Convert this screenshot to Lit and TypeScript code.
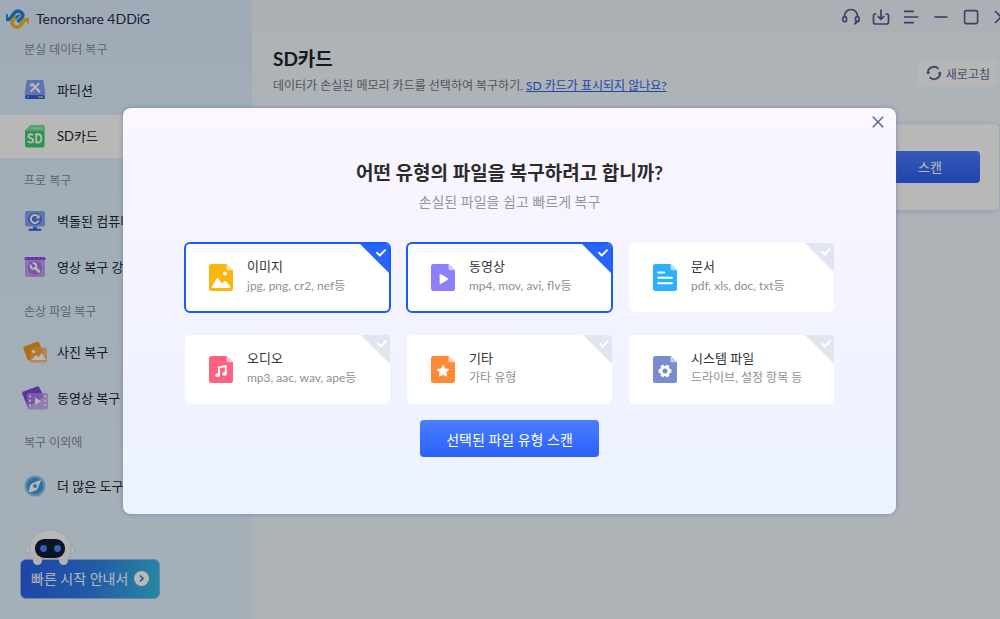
import { LitElement, html, svg, css } from "lit";
import { customElement, property, state } from "lit/decorators.js";
import { classMap } from "lit/directives/class-map.js";

const base = css`
  *,
  *::before,
  *::after {
    box-sizing: border-box;
  }
  button {
    font: inherit;
    color: inherit;
    border: 0;
    padding: 0;
    background: none;
    cursor: pointer;
  }
  svg {
    display: block;
    flex: none;
  }
`;

const fileShape = (color: string, fold: string, inner: unknown) => html`
  <svg width="24" height="27" viewBox="0 0 24 27" aria-hidden="true">
    <path d="M2.5 0H17.5L24 6.2V24.5A2.5 2.5 0 0 1 21.5 27H2.5A2.5 2.5 0 0 1 0 24.5V2.5A2.5 2.5 0 0 1 2.5 0Z" fill=${color} />
    <path d="M17.5 0L24 6.2H19A1.5 1.5 0 0 1 17.5 4.7Z" fill=${fold} />
    ${inner}
  </svg>
`;

const fileIcons: Record<string, unknown> = {
  image: fileShape("#fab50f", "#fde3a0", svg`
    <circle cx="16" cy="9.5" r="2.1" fill="#fff"/>
    <path d="M2.6 23.2L7.6 14.5Q8.3 13.5 9.1 14.5L13 19.6L15.6 17.1Q16.4 16.4 17.1 17.2L21.4 22.6Q21.7 24 20.4 24H3.4Q2.3 24 2.6 23.2Z" fill="#fff"/>`),
  video: fileShape("#8b7ffc", "#d2ccff", svg`
    <path d="M8.6 11.2Q8.6 9.6 10 10.3L16.8 14.3Q17.8 15 16.8 15.7L10 19.8Q8.6 20.4 8.6 19Z" fill="#fff"/>`),
  doc: fileShape("#29b1ff", "#b0e2ff", svg`
    <path d="M5.2 8.4H11.2M5.2 13.8H19M5.2 19.2H19" stroke="#fff" stroke-width="2" stroke-linecap="round"/>`),
  audio: fileShape("#fd6280", "#ffc4cf", svg`
    <path d="M10 19V11.4L16.8 10V17.6" fill="none" stroke="#fff" stroke-width="1.9" stroke-linejoin="round"/>
    <ellipse cx="8.6" cy="19.2" rx="2.3" ry="1.9" fill="#fff"/>
    <ellipse cx="15.5" cy="17.9" rx="2.3" ry="1.9" fill="#fff"/>`),
  other: fileShape("#ff8a34", "#ffd2b0", svg`
    <path d="M12 9.3L13.8 12.9L17.8 13.5L14.9 16.3L15.6 20.2L12 18.4L8.4 20.2L9.1 16.3L6.2 13.5L10.2 12.9Z" fill="#fff" stroke="#fff" stroke-width="1" stroke-linejoin="round"/>`),
  system: fileShape("#7a8bce", "#c9d0ec", svg`
    <circle cx="12" cy="15" r="3.9" fill="none" stroke="#fff" stroke-width="2.8"/>
    <path d="M16.2 15H18.4M7.8 15H5.6M14.1 11.3L15.2 9.4M9.9 11.3L8.8 9.4M14.1 18.7L15.2 20.6M9.9 18.7L8.8 20.6" fill="none" stroke="#fff" stroke-width="3.4"/>`),
};

const navIcons: Record<string, unknown> = {
  partition: html`<svg width="22" height="22" viewBox="0 0 22 22" aria-hidden="true">
    <path d="M4 1H18Q19.3 1 19.6 2.4L21.5 16H.5L2.4 2.4Q2.7 1 4 1Z" fill="#84a3f5"/>
    <rect x="1" y="16" width="20" height="4" rx="1.6" fill="#3360e6"/>
    <circle cx="4" cy="18" r=".8" fill="#7ff0f5"/>
    <path d="M14 18H19" stroke="#f0c35a" stroke-width="1.4"/>
    <path d="M8 4.8L15 12M14.6 4.6L7.4 12" stroke="#fff" stroke-width="2" stroke-linecap="round"/>
    <path d="M6 5.5Q7.5 7.5 9.2 5M13.5 11.5L15.8 13.4" stroke="#fff" stroke-width="1.6" fill="none"/>
  </svg>`,
  sd: html`<svg width="22" height="24" viewBox="0 0 22 24" aria-hidden="true">
    <path d="M6.5 1H18Q20.5 1 20.5 3.5V21Q20.5 23.5 18 23.5H3.5Q1 23.5 1 21V6.8Z" fill="#3fcb6e"/>
    <path d="M1 6.8L6.5 1H18Q20.5 1 20.5 3.5V7Z" fill="#7ddf9d"/>
    <path d="M10 3.5V5M12.5 3.5V5M15 3.5V5M17.5 3.5V5" stroke="#e4ffed" stroke-width="1.2"/>
    <path d="M9 11.4Q8.6 10.2 6.6 10.2Q4.4 10.2 4.4 12.2Q4.4 13.7 6.7 14.1Q9.1 14.6 9.1 16.5Q9.1 18.6 6.7 18.6Q4.5 18.6 4.1 17" fill="none" stroke="#fff" stroke-width="1.9"/>
    <path d="M12.2 10.3V18.5H14Q17.3 18.4 17.3 14.4Q17.3 10.3 14 10.3Z" fill="none" stroke="#fff" stroke-width="1.9"/>
  </svg>`,
  computer: html`<svg width="22" height="22" viewBox="0 0 22 22" aria-hidden="true">
    <rect x="1" y="1" width="20" height="15.5" rx="2" fill="#8aa2f2"/>
    <rect x="4" y="3" width="14" height="12" rx="6" fill="#5577e8"/>
    <path d="M14 6.5A4 4 0 1 0 14.6 10.5" fill="none" stroke="#fff" stroke-width="1.9"/>
    <path d="M15.6 4.8V8.6H11.8Z" fill="#fff"/>
    <path d="M9 16.5H13V19H9Z" fill="#5877e0"/>
    <path d="M5.5 19.8H16.5" stroke="#2a5ce6" stroke-width="2" stroke-linecap="round"/>
  </svg>`,
  enhance: html`<svg width="22" height="22" viewBox="0 0 22 22" aria-hidden="true">
    <rect x="1" y="3" width="20" height="18" rx="2" fill="#c4a0ee"/>
    <rect x="4" y="5" width="14" height="14" rx="6" fill="#a87be8"/>
    <path d="M.5 2.5Q.5 1 2 1H20Q21.5 1 21.5 2.5V4H.5Z" fill="#9442e6"/>
    <path d="M3 1L2 4M7 1L6 4M11 1L10 4M15 1L14 4M19 1L18 4" stroke="#b67af0" stroke-width=".8"/>
    <circle cx="9.5" cy="10" r="2.7" fill="none" stroke="#fff" stroke-width="2"/>
    <path d="M11.5 12L15 15.6" stroke="#fff" stroke-width="2.6" stroke-linecap="round"/>
    <path d="M6 6L9.2 9.6" stroke="#a87be8" stroke-width="2"/>
  </svg>`,
  photo: html`<svg width="24" height="22" viewBox="0 0 24 22" aria-hidden="true">
    <path d="M1.6 5.6L14 .8Q15.5.4 16.2 1.8L21 14L6 19.5Q5 19.6 4.5 18.4L.4 7.6Q.2 6.2 1.6 5.6Z" fill="#f19a16"/>
    <rect x="7" y="6.5" width="17" height="15" rx="2" fill="#f6c080"/>
    <path d="M7 6.6L18.2 6.5L20.5 13.5L7 18.6Z" fill="#f19a16" opacity=".6"/>
    <circle cx="10.5" cy="10.6" r="1.7" fill="#fff"/>
    <path d="M8.5 19L12.8 14L15.5 16.5L18.6 12L22.5 18.2Q22.6 19 22 19Z" fill="#fff"/>
  </svg>`,
  movie: html`<svg width="26" height="24" viewBox="0 0 26 24" aria-hidden="true">
    <path d="M1.4 5.6L15 .6Q16.4.2 17.4 1.4L22 11L8 20.5H5.5L.2 7.6Q0 6.2 1.4 5.6Z" fill="#7c46dc"/>
    <rect x="5" y="7" width="21" height="16.5" rx="2" fill="#c3a4f0" opacity=".88"/>
    <path d="M5 7H20L21.6 11L8 20H5Z" fill="#8f5fe0" opacity=".45"/>
    <path d="M13 11.5V19L19.2 15.2Z" fill="#fff"/>
    <path d="M8 9.4V22M23.3 9.4V22" stroke="#fff" stroke-width="1.8" stroke-dasharray="1.8 2.6"/>
  </svg>`,
  tools: html`<svg width="22" height="22" viewBox="0 0 22 22" aria-hidden="true">
    <circle cx="11" cy="11" r="10.5" fill="#86c5f0"/>
    <circle cx="11" cy="11" r="8.2" fill="#3c9be0"/>
    <path d="M17.2 4.8L13.6 13.8Q12 16.8 4.8 17.2Q5.4 10 8.2 8.2Z" fill="#fff"/>
    <circle cx="11" cy="11" r="1.9" fill="#3c9be0"/>
  </svg>`,
};

interface NavItem {
  icon: string;
  label: string;
  current?: boolean;
}

const navGroups: { title: string; items: NavItem[] }[] = [
  {
    title: "분실 데이터 복구",
    items: [
      { icon: "partition", label: "파티션" },
      { icon: "sd", label: "SD카드", current: true },
    ],
  },
  {
    title: "프로 복구",
    items: [
      { icon: "computer", label: "벽돌된 컴퓨터" },
      { icon: "enhance", label: "영상 복구 강화" },
    ],
  },
  {
    title: "손상 파일 복구",
    items: [
      { icon: "photo", label: "사진 복구" },
      { icon: "movie", label: "동영상 복구" },
    ],
  },
  { title: "복구 이외에", items: [{ icon: "tools", label: "더 많은 도구" }] },
];

@customElement("app-sidebar")
export class AppSidebar extends LitElement {
  static styles = [
    base,
    css`
      :host {
        display: flex;
        flex-direction: column;
        background: linear-gradient(180deg, #e0edff 0, #def0ff 20%, #e6f4ff 100%);
      }
      .brand {
        display: flex;
        align-items: center;
        gap: 7px;
        height: 41px;
        padding: 0 6px 4px;
        font-size: 14px;
        color: #25304f;
      }
      .heading {
        margin: 0;
        padding: 13px 24px 8px;
        font-size: 12px;
        line-height: 18px;
        font-weight: 400;
        color: #838d9a;
      }
      .group:first-child .heading {
        padding-top: 0;
      }
      .list {
        list-style: none;
        margin: 0;
        padding: 0;
      }
      .item {
        display: flex;
        align-items: center;
        height: 46px;
        padding: 2px 0 1px;
      }
      .item.solo {
        height: 52px;
      }
      .link {
        flex: 1;
        display: flex;
        align-items: center;
        gap: 10px;
        height: 100%;
        padding: 0 0 2px 23px;
        font-size: 13px;
        color: #20242c;
        text-decoration: none;
        white-space: nowrap;
      }
      .link.current {
        background: #fff;
      }
      .glyph {
        display: flex;
        justify-content: center;
        width: 24px;
      }
      .foot {
        margin-top: auto;
        padding: 20px;
      }
      .guide {
        position: relative;
        display: flex;
        align-items: center;
        gap: 6px;
        height: 40px;
        padding: 0 10px 2px;
        border: 1px solid #8fb9f0;
        border-radius: 6px;
        color: #fff;
        font-size: 14px;
        background: linear-gradient(100deg, #2b5fe8 0, #2f7de8 50%, #37bce0 100%);
      }
      .robot {
        position: absolute;
        left: 4px;
        top: -31px;
      }
    `,
  ];

  render() {
    return html`
      <header class="brand">
        <svg width="23" height="22" viewBox="0 0 23 22" aria-hidden="true">
          <path d="M0 6V11Q3 12.5 5 9.5L8.5 4.6Q12 1.5 15.5 4.6Q18 7.6 15.5 10.2L11.5 14" fill="none" stroke="#1a86dd" stroke-width="3.6"/>
          <path d="M11.5 7.5L7 12Q4.8 15 7.5 17.8Q11 20.6 14.4 17.6L18 12.8Q20 10.4 23 12V15.8" fill="none" stroke="#f5b520" stroke-width="3.6"/>
          <path d="M9.6 10.5L13.5 6.8" stroke="#1a86dd" stroke-width="2"/>
        </svg>
        <span>Tenorshare 4DDiG</span>
      </header>
      <nav>
        ${navGroups.map(
          (group) => html`
            <section class="group">
              <h2 class="heading">${group.title}</h2>
              <ul class="list">
                ${group.items.map(
                  (item) => html`
                    <li class=${classMap({ item: true, solo: group.items.length === 1 })}>
                      <a class=${classMap({ link: true, current: !!item.current })} href="#${item.icon}">
                        <span class="glyph">${navIcons[item.icon]}</span>${item.label}
                      </a>
                    </li>
                  `
                )}
              </ul>
            </section>
          `
        )}
      </nav>
      <div class="foot">
        <button class="guide" type="button">
          <svg class="robot" width="50" height="37" viewBox="0 0 50 37" aria-hidden="true">
            <defs>
              <radialGradient id="shell" cx=".5" cy=".4" r=".6">
                <stop offset=".5" stop-color="#fff"/>
                <stop offset="1" stop-color="#f4f4f4"/>
              </radialGradient>
            </defs>
            <rect x=".5" y="16.5" width="7" height="8" rx="3.5" fill="#fff" stroke="#c8d2dc" stroke-width=".7"/>
            <rect x="42.5" y="16.5" width="7" height="8" rx="3.5" fill="#fff" stroke="#c8d2dc" stroke-width=".7"/>
            <path d="M6 30C2 22 4 13 9 7.5Q16 .5 25 .5T41 7.5C46 13 48 22 44 30Z" fill="url(#shell)" stroke="#d3dbe3" stroke-width=".6"/>
            <rect x="10" y="10" width="30" height="19" rx="9" fill="#131a33"/>
            <circle cx="18.5" cy="19.5" r="3.4" fill="#3d8dff"/>
            <circle cx="32.5" cy="19.5" r="3.4" fill="#3d8dff"/>
            <rect x="8" y="27" width="9" height="9" rx="4.5" fill="#f6f6f8"/>
            <rect x="34" y="27" width="9" height="9" rx="4.5" fill="#f6f6f8"/>
          </svg>
          <span>빠른 시작 안내서</span>
          <svg width="15" height="15" viewBox="0 0 15 15" aria-hidden="true">
            <circle cx="7.5" cy="7.5" r="7.5" fill="#fff"/>
            <path d="M6 4.5L9 7.5L6 10.5" fill="none" stroke="#2f86d8" stroke-width="1.7"/>
          </svg>
        </button>
      </div>
    `;
  }
}

@customElement("app-workspace")
export class AppWorkspace extends LitElement {
  static styles = [
    base,
    css`
      :host {
        display: block;
        min-width: 0;
        overflow: hidden;
        background: linear-gradient(180deg, #eff4fb 0, #eff4fb 32px, #f2f8fe 33px, #f2f8fe 100%);
      }
      .bar {
        display: flex;
        justify-content: flex-end;
        gap: 12px;
        height: 34px;
        margin-right: -10px;
        color: #4d5e8c;
      }
      .tool {
        display: grid;
        place-items: center;
        width: 18px;
      }
      .top {
        display: flex;
        justify-content: space-between;
        align-items: flex-start;
        padding: 11px 3px 0 21px;
      }
      .title {
        margin: 0;
        font-size: 19px;
        line-height: 28px;
        font-weight: 700;
        color: #20242c;
      }
      .note {
        margin: 4px 0 0;
        font-size: 12px;
        line-height: 18px;
        color: #6d7582;
      }
      .note a {
        color: #2f62ee;
      }
      .refresh {
        display: flex;
        align-items: center;
        gap: 4px;
        height: 26px;
        margin-top: 15px;
        padding: 0 7px 0 8px;
        border-radius: 4px;
        background: #fdfdfd;
        font-size: 12px;
        color: #5a6a94;
      }
      .panel {
        display: flex;
        justify-content: flex-end;
        align-items: center;
        height: 86px;
        margin: 29px 1px 0 21px;
        padding-right: 19px;
        border-radius: 5px;
        background: #fff;
        box-shadow: 0 1px 6px #c9d5f3;
      }
      .scan {
        width: 100px;
        height: 32px;
        padding-bottom: 2px;
        border-radius: 4px;
        color: #fff;
        font-size: 13px;
        background: linear-gradient(180deg, #4a7dfb, #2b60f4);
      }
    `,
  ];

  render() {
    return html`
      <div class="bar">
        <button class="tool" type="button" aria-label="고객 지원">
          <svg width="18" height="18" viewBox="0 0 18 18" fill="none" stroke="currentColor" stroke-width="1.7">
            <path d="M2.5 9V8A6.5 6.5 0 0 1 15.5 8V9M15.3 12Q15 15.4 12 16"/>
            <rect x=".9" y="8.6" width="3.6" height="5" rx="1.7"/>
            <rect x="13.5" y="8.6" width="3.6" height="5" rx="1.7"/>
          </svg>
        </button>
        <button class="tool" type="button" aria-label="다운로드">
          <svg width="18" height="18" viewBox="0 0 18 18" fill="none" stroke="currentColor" stroke-width="1.7">
            <path d="M4.5 6H3Q1.5 6 1.5 7.5V14Q1.5 16 3.5 16H14.5Q16.5 16 16.5 14V7.5Q16.5 6 15 6H13.5M9 1.5V11M5.8 8.2L9 11.3L12.2 8.2"/>
          </svg>
        </button>
        <button class="tool" type="button" aria-label="메뉴">
          <svg width="18" height="18" viewBox="0 0 18 18" stroke="currentColor" stroke-width="1.7">
            <path d="M2 3.3H12M2 9H16.5M2 14.6H12"/>
          </svg>
        </button>
        <button class="tool" type="button" aria-label="최소화">
          <svg width="18" height="18" viewBox="0 0 18 18" stroke="currentColor" stroke-width="1.6"><path d="M2.5 9H15.5"/></svg>
        </button>
        <button class="tool" type="button" aria-label="최대화">
          <svg width="18" height="18" viewBox="0 0 18 18" fill="none" stroke="currentColor" stroke-width="1.6">
            <rect x="2.6" y="2.6" width="13" height="13" rx="1.8"/>
          </svg>
        </button>
        <button class="tool" type="button" aria-label="종료">
          <svg width="18" height="18" viewBox="0 0 18 18" stroke="currentColor" stroke-width="1.6">
            <path d="M3 3L15 15M15 3L3 15"/>
          </svg>
        </button>
      </div>
      <div class="top">
        <div>
          <h1 class="title">SD카드</h1>
          <p class="note">
            데이터가 손실된 메모리 카드를 선택하여 복구하기, <a href="#help">SD 카드가 표시되지 않나요?</a>
          </p>
        </div>
        <button class="refresh" type="button">
          <svg width="16" height="16" viewBox="0 0 16 16" fill="none" stroke="currentColor" stroke-width="2" aria-hidden="true">
            <path d="M2 8.6A6 6 0 0 1 12.4 3.8M14 7.4A6 6 0 0 1 3.6 12.2"/>
            <path d="M0 7.2L2.2 9.6L4.6 7.2M11.4 8.8L13.8 6.4L16 8.8" fill="currentColor" stroke="none"/>
          </svg>
          새로고침
        </button>
      </div>
      <section class="panel"><button class="scan" type="button">스캔</button></section>
    `;
  }
}

@customElement("type-card")
export class TypeCard extends LitElement {
  @property() icon = "";
  @property() name = "";
  @property() hint = "";
  @property({ type: Boolean }) checked = false;

  static styles = [
    base,
    css`
      .card {
        position: relative;
        display: flex;
        align-items: center;
        gap: 14px;
        height: 71px;
        padding-left: 24px;
        border: 1px solid transparent;
        border-radius: 6px;
        background: #fff padding-box;
        cursor: pointer;
      }
      .card.on {
        padding-left: 23px;
        border: 2px solid #1c5cf6;
      }
      .text {
        display: grid;
        padding-bottom: 4px;
      }
      .name {
        font-size: 13px;
        line-height: 20px;
        color: #333;
      }
      .hint {
        font-size: 12px;
        line-height: 19px;
        color: #8e8e8e;
      }
      .box {
        appearance: none;
        position: absolute;
        top: 0;
        right: 0;
        width: 29px;
        height: 29px;
        margin: 0;
        border-top-right-radius: 4px;
        background: #e1e5ef;
        clip-path: polygon(0 0, 100% 0, 100% 100%);
        cursor: pointer;
      }
      .on .box {
        background: #2864fb;
      }
      .tick {
        position: absolute;
        top: 5px;
        right: 3px;
        pointer-events: none;
      }
    `,
  ];

  private toggle(e: Event) {
    this.checked = (e.target as HTMLInputElement).checked;
  }

  render() {
    return html`
      <label class=${classMap({ card: true, on: this.checked })}>
        ${fileIcons[this.icon]}
        <span class="text"><span class="name">${this.name}</span><span class="hint">${this.hint}</span></span>
        <input class="box" type="checkbox" .checked=${this.checked} @change=${this.toggle} />
        <svg class="tick" width="10" height="8" viewBox="0 0 10 8" aria-hidden="true">
          <path d="M1 3.8L3.8 6.5L9 1.2" fill="none" stroke="#fff" stroke-width="1.9" stroke-linecap="round" stroke-linejoin="round"/>
        </svg>
      </label>
    `;
  }
}

const fileTypes = [
  { icon: "image", name: "이미지", hint: "jpg, png, cr2, nef등", checked: true },
  { icon: "video", name: "동영상", hint: "mp4, mov, avi, flv등", checked: true },
  { icon: "doc", name: "문서", hint: "pdf, xls, doc, txt등", checked: false },
  { icon: "audio", name: "오디오", hint: "mp3, aac, wav, ape등", checked: false },
  { icon: "other", name: "기타", hint: "가타 유형", checked: false },
  { icon: "system", name: "시스템 파일", hint: "드라이브, 설정 항목 등", checked: false },
];

@customElement("type-dialog")
export class TypeDialog extends LitElement {
  static styles = [
    base,
    css`
      :host {
        display: block;
      }
      .dialog {
        position: relative;
        display: flex;
        flex-direction: column;
        align-items: center;
        padding: 51px 61px 57px;
        border-radius: 8px;
        background: linear-gradient(180deg, #fbf6ff 0, #f3f3ff 45%, #ebf3ff 100%);
        box-shadow: 0 0 4px rgba(70, 90, 160, 0.5);
      }
      .close {
        position: absolute;
        top: 7px;
        right: 11px;
        padding: 1px;
        color: #536a9c;
      }
      .title {
        margin: 0;
        font-size: 19px;
        line-height: 28px;
        font-weight: 700;
        color: #2b2b2b;
      }
      .sub {
        margin: 5px 0 30px;
        font-size: 14px;
        line-height: 20px;
        color: #95959b;
      }
      .grid {
        align-self: stretch;
        display: grid;
        grid-template-columns: repeat(3, 1fr);
        gap: 21px 15px;
      }
      .go {
        height: 37px;
        margin-top: 15px;
        padding: 0 26px;
        border-radius: 4px;
        color: #fff;
        font-size: 14px;
        background: linear-gradient(180deg, #4a7dff, #2962fb);
      }
    `,
  ];

  render() {
    return html`
      <section class="dialog" role="dialog" aria-modal="true" aria-labelledby="title">
        <button class="close" type="button" aria-label="닫기" @click=${() => this.dispatchEvent(new Event("close"))}>
          <svg width="12" height="12" viewBox="0 0 12 12" stroke="currentColor" stroke-width="1.5">
            <path d="M.8.8L11.2 11.2M11.2.8L.8 11.2"/>
          </svg>
        </button>
        <h2 class="title" id="title">어떤 유형의 파일을 복구하려고 합니까?</h2>
        <p class="sub">손실된 파일을 쉽고 빠르게 복구</p>
        <div class="grid">
          ${fileTypes.map(
            (t) => html`<type-card .icon=${t.icon} .name=${t.name} .hint=${t.hint} .checked=${t.checked}></type-card>`
          )}
        </div>
        <button class="go" type="button">선택된 파일 유형 스캔</button>
      </section>
    `;
  }
}

@customElement("app-root")
export class AppRoot extends LitElement {
  @state() private open = true;

  static styles = [
    base,
    css`
      :host {
        position: relative;
        display: grid;
        grid-template-columns: 252px minmax(0, 1fr);
        min-height: 100vh;
        overflow: hidden;
        font-family: Lato, "Noto Sans CJK KR", sans-serif;
      }
      .scrim {
        position: absolute;
        inset: 0;
        display: flex;
        align-items: center;
        justify-content: center;
        padding: 3px 0 0 19px;
        background: rgba(0, 0, 0, 0.28);
      }
      .modal {
        flex: 0 1 773px;
      }
    `,
  ];

  render() {
    return html`
      <app-sidebar></app-sidebar>
      <app-workspace></app-workspace>
      ${this.open
        ? html`<div class="scrim"><type-dialog class="modal" @close=${() => (this.open = false)}></type-dialog></div>`
        : null}
    `;
  }
}
